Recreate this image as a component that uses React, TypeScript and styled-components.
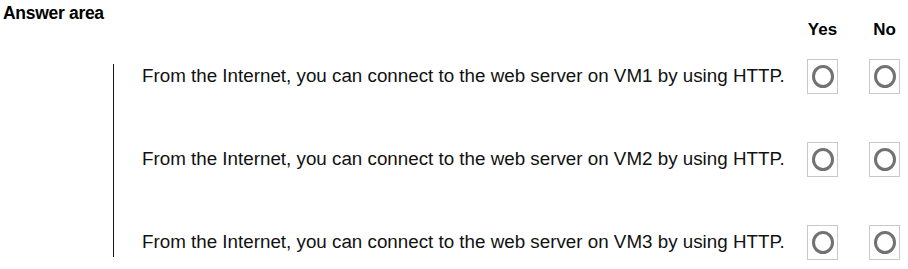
import styled, { createGlobalStyle } from "styled-components";

const GlobalStyle = createGlobalStyle`
  body {
    margin: 0;
    background: #ffffff;
    font-family: "Liberation Sans", Arial, sans-serif;
    color: #000000;
  }
`;

const statements = [
  "From the Internet, you can connect to the web server on VM1 by using HTTP.",
  "From the Internet, you can connect to the web server on VM2 by using HTTP.",
  "From the Internet, you can connect to the web server on VM3 by using HTTP.",
];

const App = () => {
  return (
    <>
      <GlobalStyle />
      <StPage>
        <StHeader>
          <StTitle>Answer area</StTitle>
          <StChoiceGroup>
            <StChoiceLabel>Yes</StChoiceLabel>
            <StChoiceLabel>No</StChoiceLabel>
          </StChoiceGroup>
        </StHeader>
        <StBody>
          {statements.map((text) => (
            <StRow key={text}>
              <StStatement>{text}</StStatement>
              <StChoiceGroup>
                <StRadioBox aria-label="Yes">
                  <StRing />
                </StRadioBox>
                <StRadioBox aria-label="No">
                  <StRing />
                </StRadioBox>
              </StChoiceGroup>
            </StRow>
          ))}
        </StBody>
      </StPage>
    </>
  );
};

export default App;

const StPage = styled.div`
  width: 908px;
  height: 269px;
  padding: 3px 0 0 3px;
  box-sizing: border-box;
  display: flex;
  flex-direction: column;
`;

const StHeader = styled.div`
  display: flex;
  align-items: flex-start;
`;

const StTitle = styled.span`
  flex: 1;
  font-size: 17.5px;
  line-height: 20px;
  font-weight: 700;
  letter-spacing: -0.3px;
`;

const StChoiceGroup = styled.div`
  display: flex;
  align-items: center;
  gap: 31px;
  margin-right: 8px;
`;

const StChoiceLabel = styled.span`
  width: 31px;
  padding-top: 17px;
  text-align: center;
  font-size: 17px;
  line-height: 20px;
  font-weight: 700;
`;

const StBody = styled.div`
  margin: 24px 0 0 110px;
  padding: 0 0 3px 0;
  border-left: 1px solid #111111;
  display: flex;
  flex-direction: column;
  gap: 59px;
`;

const StRow = styled.div`
  height: 24px;
  display: flex;
  align-items: center;
`;

const StStatement = styled.span`
  flex: 1;
  padding-left: 28px;
  font-size: 18.8px;
  line-height: 24px;
  white-space: nowrap;
  color: #111111;
`;

const StRadioBox = styled.div`
  width: 31px;
  height: 35px;
  flex-shrink: 0;
  box-sizing: border-box;
  border: 1px solid #c9c9c9;
  background: #ffffff;
  display: flex;
  align-items: center;
  justify-content: center;
`;

const StRing = styled.span`
  width: 22px;
  height: 23px;
  box-sizing: border-box;
  border: 3px solid #727272;
  border-radius: 50%;
`;
